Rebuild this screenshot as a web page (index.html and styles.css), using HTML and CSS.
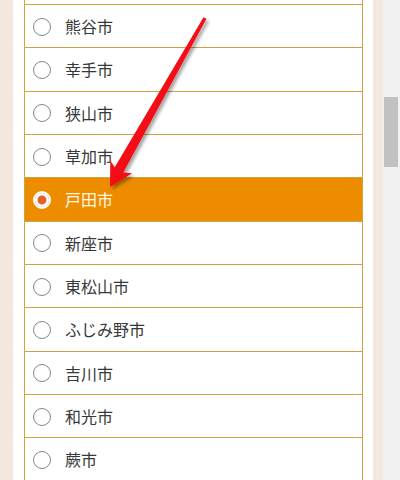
FILE: index.html
```html
<!DOCTYPE html>
<html lang="ja">
<head>
<meta charset="utf-8">
<title>市区町村選択</title>
<link rel="stylesheet" href="styles.css">
</head>
<body>
<div class="page">
  <div class="strip strip-left"></div>
  <div class="content">
    <ul class="list">
      <li class="peek"></li>
      <li class="row"><span class="radio"></span><span class="label">熊谷市</span></li>
      <li class="row"><span class="radio"></span><span class="label">幸手市</span></li>
      <li class="row"><span class="radio"></span><span class="label">狭山市</span></li>
      <li class="row"><span class="radio"></span><span class="label">草加市</span></li>
      <li class="row selected"><span class="radio"></span><span class="label">戸田市</span></li>
      <li class="row"><span class="radio"></span><span class="label">新座市</span></li>
      <li class="row"><span class="radio"></span><span class="label">東松山市</span></li>
      <li class="row"><span class="radio"></span><span class="label">ふじみ野市</span></li>
      <li class="row"><span class="radio"></span><span class="label">吉川市</span></li>
      <li class="row"><span class="radio"></span><span class="label">和光市</span></li>
      <li class="row"><span class="radio"></span><span class="label">蕨市</span></li>
    </ul>
  </div>
  <div class="strip strip-right"></div>
  <div class="scrollbar"><div class="thumb"></div></div>
</div>
<svg class="arrow" width="400" height="480" viewBox="0 0 400 480" aria-hidden="true">
  <defs>
    <filter id="sh" x="-20%" y="-20%" width="140%" height="140%">
      <feDropShadow dx="2.5" dy="2.5" stdDeviation="1.6" flood-color="#000" flood-opacity="0.35"/>
    </filter>
  </defs>
  <polygon filter="url(#sh)" fill="#f40f12"
    points="206.5,18.8 123.3,172.4 132.2,173.2 110,187 110.3,160.3 114.6,167.5 203.5,17.2"/>
</svg>
</body>
</html>
```
FILE: styles.css
```css
html, body {
  margin: 0;
  padding: 0;
  width: 400px;
  height: 480px;
  overflow: hidden;
  background: #ffffff;
}
body {
  position: relative;
  font-family: "Noto Sans CJK JP", "Noto Sans", sans-serif;
}
.page {
  display: flex;
  height: 480px;
}
.strip {
  width: 13px;
  flex: none;
  background: #f4e7de;
}
.strip-right {
  width: 10px;
}
.content {
  flex: none;
  width: 339px;
  padding: 0 10px 0 11px;
  background: #ffffff;
  overflow: hidden;
}
.list {
  list-style: none;
  margin: 0;
  padding: 0;
  border-left: 1px solid #c9a546;
  border-right: 1px solid #c9a546;
}
.peek {
  height: 4px;
}
.row {
  box-sizing: border-box;
  height: 43.333px;
  border-top: 1px solid #c9a546;
  display: flex;
  align-items: center;
  padding-left: 8px;
  color: #383838;
  font-size: 16px;
  background: #ffffff;
}
.radio {
  box-sizing: border-box;
  width: 18px;
  height: 18px;
  border: 1.4px solid #858585;
  border-radius: 50%;
  background: #ffffff;
  flex: none;
  margin-right: 14px;
  margin-top: 1px;
}
.label {
  line-height: 1;
  letter-spacing: 0;
}
.selected {
  background: #ee8c00;
  color: #fff7e6;
}
.selected .radio {
  border: 2.5px solid #ffffff;
  background: #e2622a;
  box-shadow: inset 0 0 0 2.5px #ffffff;
}
.scrollbar {
  flex: none;
  width: 17px;
  background: #f1f1f1;
  padding: 97px 2px 0 1px;
  box-sizing: border-box;
}
.thumb {
  height: 70px;
  background: #c1c1c1;
}
.arrow {
  position: absolute;
  left: 0;
  top: 0;
  pointer-events: none;
}
```
